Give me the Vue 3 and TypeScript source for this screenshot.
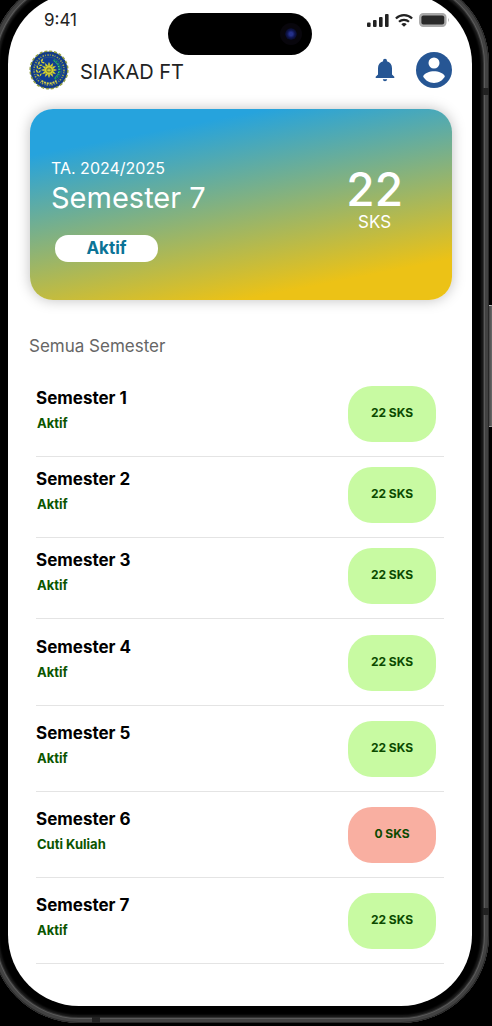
<script setup lang="ts">
interface Semester {
  name: string
  status: string
  sks: number
  onLeave?: boolean
}

const semesters: Semester[] = [
  { name: 'Semester 1', status: 'Aktif', sks: 22 },
  { name: 'Semester 2', status: 'Aktif', sks: 22 },
  { name: 'Semester 3', status: 'Aktif', sks: 22 },
  { name: 'Semester 4', status: 'Aktif', sks: 22 },
  { name: 'Semester 5', status: 'Aktif', sks: 22 },
  { name: 'Semester 6', status: 'Cuti Kuliah', sks: 0, onLeave: true },
  { name: 'Semester 7', status: 'Aktif', sks: 22 },
]

const rays = Array.from({ length: 12 }, (_, i) => i * 30)
const leaves = [0, 1, 2, 3, 4]
</script>

<template>
  <div class="stage">
    <div class="phone">
      <span class="band band-top"></span>
      <span class="band band-low"></span>
      <span class="band band-bottom"></span>
      <span class="side-button"></span>

      <div class="screen">
        <div class="status">
          <span class="time">9:41</span>
          <div class="status-icons">
            <svg width="22" height="13" viewBox="0 0 22 13" fill="#222" aria-hidden="true">
              <rect x="0" y="8.500" width="3.600" height="4.500" rx="1" />
              <rect x="6" y="6" width="3.600" height="7" rx="1" />
              <rect x="12" y="3" width="3.600" height="10" rx="1" />
              <rect x="18" y="0" width="3.600" height="13" rx="1" />
            </svg>
            <svg width="18" height="13" viewBox="0 0 18 13" fill="none" stroke="#222" stroke-width="2.2" aria-hidden="true">
              <path d="M.9 4.5a11.6 11.6 0 0 1 16.2 0" />
              <path d="M4 7.8a7.2 7.2 0 0 1 10 0" />
              <path d="M9 12.8 6.3 10.2a4 4 0 0 1 5.4 0z" fill="#222" stroke="none" />
            </svg>
            <svg width="31" height="14" viewBox="0 0 31 14" aria-hidden="true">
              <rect x=".8" y=".8" width="26" height="12.4" rx="3.4" fill="#aaa" stroke="#aaa" stroke-width="1.5" />
              <rect x="2.4" y="2.4" width="22.8" height="9.2" rx="2" fill="#2a2a2a" />
              <path d="M29 4.8q1.8 2.2 0 4.4z" fill="#aaa" />
            </svg>
          </div>
        </div>
        <div class="island"><span class="camera"></span></div>

        <header class="header">
          <svg class="crest" width="40" height="40" viewBox="0 0 40 40" fill="none" aria-hidden="true">
            <circle cx="20" cy="20" r="18.6" fill="#103d91" />
            <circle cx="20" cy="20" r="18.8" stroke="#8f9c42" stroke-width="1.6" stroke-dasharray="3 1.9" />
            <circle cx="20" cy="20" r="17.4" stroke="#173b78" stroke-width="1" />
            <circle cx="20" cy="20" r="15" stroke="#a4ab45" stroke-width="1.6" stroke-dasharray="1.4 1.1 .8 1.6" />
            <circle cx="20" cy="20" r="12.9" stroke="#496b70" stroke-width=".5" />
            <g v-for="n in leaves" :key="n" :transform="`rotate(${n * 20} 20 20)`">
              <path d="M10.8 26.5q-3-.2-3.2-2.6q2.6 0 3.2 2.6q-.3-2.7 1.7-3.6q.6 2.3-1.7 3.6" fill="#d6d333" />
            </g>
            <path d="M24.5 10a11 11 0 0 1 1 19" stroke="#1c9a55" stroke-width="2.4" stroke-dasharray="1.8 .8" />
            <path d="M25.5 11.4a9.6 9.6 0 0 1 .5 16" stroke="#c8e6c5" stroke-width=".6" stroke-dasharray="1 2" />
            <path
              v-for="a in rays"
              :key="a"
              d="m19 15.500 1-3 1 3z"
              fill="#e4dc27"
              stroke="#e4dc27"
              stroke-width=".4"
              :transform="`rotate(${a} 20 20)`"
            />
            <circle cx="20" cy="20" r="4.3" fill="#d8d32c" />
            <circle cx="20" cy="20" r="2.6" fill="#777f38" />
            <path d="M18.2 20.2h3.6M20 18.6v2.8" stroke="#efe64a" stroke-width=".8" />
            <path d="M12.5 30.8q7.5 5.2 15 0" stroke="#d2cf46" stroke-width="1.8" stroke-dasharray="2 .9" />
          </svg>
          <h1 class="brand">SIAKAD FT</h1>
          <button class="icon-button bell" type="button" aria-label="Notifikasi">
            <svg width="20" height="24" viewBox="0 0 20 24" fill="#265694">
              <path d="M10 .8c-1.1 0-1.9.8-1.9 1.8v.6C4.8 4 3 6.8 3 10.2v6.3L.7 18.8V20h18.6v-1.2L17 16.500v-6.300C17 6.800 15.200 4 11.900 3.200v-.6c0-1-.8-1.800-1.900-1.800z" />
              <path d="M7.800 21.300h4.400c-.2 1.200-1 1.900-2.200 1.900s-2-.7-2.200-1.900z" />
            </svg>
          </button>
          <button class="icon-button" type="button" aria-label="Profil">
            <svg width="36" height="36" viewBox="0 0 36 36">
              <circle cx="18" cy="18" r="18" fill="#265694" />
              <circle cx="18" cy="11" r="5.500" fill="#fff" />
              <path d="M7.200 24.800c0-3.600 7-5.600 10.800-5.600s10.800 2 10.800 5.600c-2.400 3.800-6.200 6.200-10.800 6.200S9.600 28.600 7.200 24.800z" fill="#fff" />
            </svg>
          </button>
        </header>

        <section class="card">
          <div class="current">
            <p class="year">TA. 2024/2025</p>
            <h2 class="term">Semester 7</h2>
            <span class="badge">Aktif</span>
          </div>
          <div class="credits">
            <span class="credits-value">22</span>
            <span class="credits-unit">SKS</span>
          </div>
        </section>

        <h2 class="list-title">Semua Semester</h2>
        <ul class="list">
          <li v-for="s in semesters" :key="s.name" class="row">
            <div class="row-text">
              <h3 class="row-name">{{ s.name }}</h3>
              <p class="row-status">{{ s.status }}</p>
            </div>
            <span class="pill" :class="{ 'pill-leave': s.onLeave }">{{ s.sks }} SKS</span>
          </li>
        </ul>
      </div>
    </div>
  </div>
</template>

<style>
body {
  margin: 0;
  background: #000;
}
</style>

<style scoped>
.stage {
  overflow: hidden;
  padding: 0 3px 3px 0;
  background: #000;
  font-family: Inter, "Open Sans", "Liberation Sans", sans-serif;
}
h1, h2, h3, p, ul {
  margin: 0;
  padding: 0;
}
.phone {
  position: relative;
  margin: -24px 0 0 -9px;
  padding: 17px;
  border-radius: 88px;
  background: #000;
  box-shadow:
    inset 0 0 0 1px #292929,
    inset 0 0 0 4px #424242,
    inset 0 0 0 5px #5b5b5b,
    inset 0 0 0 6px #333,
    inset 0 0 2px 8px #1b1b1b;
}
.band {
  position: absolute;
  background: #222;
}
.band-top, .band-low {
  right: 0;
  width: 6px;
  height: 7px;
}
.band-top { top: 112px; }
.band-low { bottom: 108px; }
.band-bottom {
  left: 101px;
  bottom: 0;
  width: 8px;
  height: 6px;
}
.side-button {
  position: absolute;
  top: 329px;
  right: -4px;
  width: 4px;
  height: 120px;
  border-radius: 0 2px 2px 0;
  border-top: 1px solid #bbb;
  border-bottom: 1px solid #999;
  background: linear-gradient(90deg, #444, #777);
}
.screen {
  position: relative;
  padding: 7px 20px 42px 21px;
  border-radius: 71px;
  background: #fff;
}
.status {
  display: flex;
  justify-content: space-between;
  align-items: center;
  height: 40px;
  padding: 0 2px 0 15px;
}
.time {
  font-size: 17px;
  line-height: 20px;
  color: #222;
}
.status-icons {
  display: flex;
  align-items: center;
  gap: 6px;
}
.island {
  position: absolute;
  top: 20px;
  left: 50%;
  width: 144px;
  height: 42px;
  margin-left: -72px;
  border-radius: 21px;
  background: #000;
}
.camera {
  position: absolute;
  top: 15px;
  right: 15px;
  width: 12px;
  height: 12px;
  border-radius: 50%;
  background: radial-gradient(circle, #24308a 0 20%, #0f1550 45%, #090b25 70%);
  box-shadow: 0 0 0 5px #08060c;
}
.header {
  display: flex;
  align-items: center;
  height: 44px;
  margin-top: 8px;
}
.brand {
  flex: 1;
  margin-left: 11px;
  padding-top: 4px;
  font-size: 20px;
  line-height: 24px;
  font-weight: 400;
  color: #222;
}
.icon-button {
  display: flex;
  padding: 0;
  border: 0;
  background: none;
  cursor: pointer;
}
.bell { margin-right: 21px; }
.card {
  display: flex;
  justify-content: space-between;
  margin: 17px 0 0 1px;
  padding: 49px 49px 38px 21px;
  border-radius: 23px;
  background: linear-gradient(169deg, #26a3dd 17%, #ecc216 85%);
  box-shadow: 0 0 14px rgba(0, 0, 0, 0.25);
  color: #fff;
}
.current {
  display: flex;
  flex-direction: column;
  align-items: flex-start;
}
.year {
  font-size: 16px;
  line-height: 20px;
}
.term {
  font-size: 29px;
  line-height: 40px;
  font-weight: 400;
}
.badge {
  min-width: 103px;
  margin: 17px 0 0 4px;
  border-radius: 13px;
  background: #fff;
  color: #0b7396;
  font-size: 17px;
  line-height: 27px;
  font-weight: 700;
  text-align: center;
}
.credits {
  display: flex;
  flex-direction: column;
  align-items: center;
  padding-top: 8px;
}
.credits-value {
  font-size: 46px;
  line-height: 46px;
  font-weight: 500;
}
.credits-unit {
  font-size: 17px;
  line-height: 20px;
}
.list-title {
  margin-top: 34px;
  font-size: 17px;
  line-height: 24px;
  font-weight: 400;
  color: #666;
}
.list {
  margin: 18px 8px 0 7px;
  list-style: none;
}
.row {
  display: flex;
  justify-content: space-between;
  padding: 10px 8px 14px 0;
  border-bottom: 1px solid #e4e4e4;
}
.row:nth-child(n + 4) { padding-top: 15px; }
.row:nth-child(4) { padding-top: 16px; }
.row-name {
  font-size: 17px;
  line-height: 24px;
  font-weight: 700;
  color: #000;
}
.row-status {
  margin: 3px 0 0 1px;
  font-size: 13px;
  line-height: 20px;
  font-weight: 700;
  color: #0b5500;
}
.pill {
  width: 88px;
  border-radius: 24px;
  background: #c8faa2;
  color: #0b4a00;
  font-size: 12px;
  line-height: 54px;
  height: 56px;
  font-weight: 700;
  text-align: center;
}
.pill-leave { background: #f9afa1; }
</style>
